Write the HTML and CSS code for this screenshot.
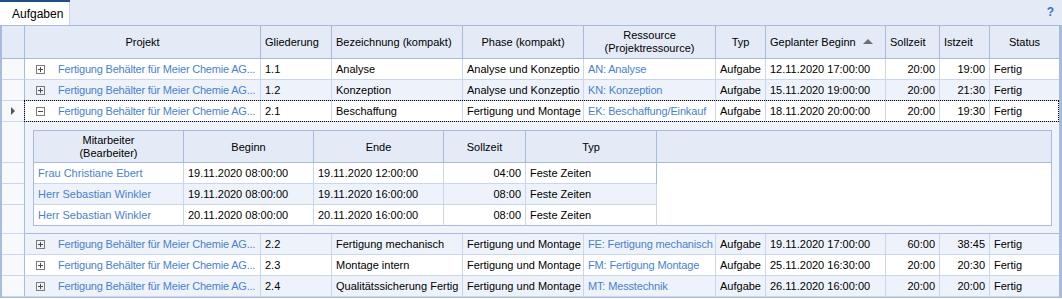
FILE: index.html
```html
<!DOCTYPE html>
<html lang="de">
<head>
    <meta charset="UTF-8">
    <title>Aufgaben</title>
    <link rel="stylesheet" href="styles.css">
</head>
<body>
    <div class="tabbar">
        <div class="tab">Aufgaben</div>
        <span class="help">?</span>
    </div>

    <div class="grid">
        <div class="row head">
            <div class="cell ind"></div>
            <div class="cell center">Projekt</div>
            <div class="cell">Gliederung</div>
            <div class="cell">Bezeichnung (kompakt)</div>
            <div class="cell center">Phase (kompakt)</div>
            <div class="cell center two">Ressource<br>(Projektressource)</div>
            <div class="cell center">Typ</div>
            <div class="cell sort">Geplanter Beginn <span class="arrow"></span></div>
            <div class="cell">Sollzeit</div>
            <div class="cell">Istzeit</div>
            <div class="cell center">Status</div>
        </div>

        <div class="row">
            <div class="cell ind"></div>
            <div class="cell proj"><span class="exp plus"></span><span class="link ell">Fertigung Behälter für Meier Chemie AG...</span></div>
            <div class="cell">1.1</div>
            <div class="cell">Analyse</div>
            <div class="cell">Analyse und Konzeptio</div>
            <div class="cell link res">AN: Analyse</div>
            <div class="cell">Aufgabe</div>
            <div class="cell">12.11.2020 17:00:00</div>
            <div class="cell num">20:00</div>
            <div class="cell num">19:00</div>
            <div class="cell">Fertig</div>
        </div>

        <div class="row alt">
            <div class="cell ind"></div>
            <div class="cell proj"><span class="exp plus"></span><span class="link ell">Fertigung Behälter für Meier Chemie AG...</span></div>
            <div class="cell">1.2</div>
            <div class="cell">Konzeption</div>
            <div class="cell">Analyse und Konzeptio</div>
            <div class="cell link res">KN: Konzeption</div>
            <div class="cell">Aufgabe</div>
            <div class="cell">15.11.2020 19:00:00</div>
            <div class="cell num">20:00</div>
            <div class="cell num">21:30</div>
            <div class="cell">Fertig</div>
        </div>

        <div class="row focus">
            <div class="cell ind"><span class="pointer"></span></div>
            <div class="cell proj"><span class="exp"></span><span class="link ell">Fertigung Behälter für Meier Chemie AG...</span></div>
            <div class="cell">2.1</div>
            <div class="cell">Beschaffung</div>
            <div class="cell">Fertigung und Montage</div>
            <div class="cell link res">EK: Beschaffung/Einkauf</div>
            <div class="cell">Aufgabe</div>
            <div class="cell">18.11.2020 20:00:00</div>
            <div class="cell num">20:00</div>
            <div class="cell num">19:30</div>
            <div class="cell">Fertig</div>
        </div>

        <div class="detail-row">
            <div class="cell ind detail-ind"></div>
            <div class="detail">
                <div class="sub">
                    <div class="sh center two">Mitarbeiter<br>(Bearbeiter)</div>
                    <div class="sh center">Beginn</div>
                    <div class="sh center">Ende</div>
                    <div class="sh center">Sollzeit</div>
                    <div class="sh center">Typ</div>
                    <div class="sh"></div>

                    <div class="sc link">Frau Christiane Ebert</div>
                    <div class="sc">19.11.2020 08:00:00</div>
                    <div class="sc">19.11.2020 12:00:00</div>
                    <div class="sc num">04:00</div>
                    <div class="sc">Feste Zeiten</div>
                    <div class="sc blank"></div>

                    <div class="sc alt link">Herr Sebastian Winkler</div>
                    <div class="sc alt">19.11.2020 08:00:00</div>
                    <div class="sc alt">19.11.2020 16:00:00</div>
                    <div class="sc alt num">08:00</div>
                    <div class="sc alt">Feste Zeiten</div>

                    <div class="sc link">Herr Sebastian Winkler</div>
                    <div class="sc">20.11.2020 08:00:00</div>
                    <div class="sc">20.11.2020 16:00:00</div>
                    <div class="sc num">08:00</div>
                    <div class="sc">Feste Zeiten</div>
                </div>
            </div>
        </div>

        <div class="row alt">
            <div class="cell ind"></div>
            <div class="cell proj"><span class="exp plus"></span><span class="link ell">Fertigung Behälter für Meier Chemie AG...</span></div>
            <div class="cell">2.2</div>
            <div class="cell">Fertigung mechanisch</div>
            <div class="cell">Fertigung und Montage</div>
            <div class="cell link res">FE: Fertigung mechanisch</div>
            <div class="cell">Aufgabe</div>
            <div class="cell">19.11.2020 17:00:00</div>
            <div class="cell num">60:00</div>
            <div class="cell num">38:45</div>
            <div class="cell">Fertig</div>
        </div>

        <div class="row">
            <div class="cell ind"></div>
            <div class="cell proj"><span class="exp plus"></span><span class="link ell">Fertigung Behälter für Meier Chemie AG...</span></div>
            <div class="cell">2.3</div>
            <div class="cell">Montage intern</div>
            <div class="cell">Fertigung und Montage</div>
            <div class="cell link res">FM: Fertigung Montage</div>
            <div class="cell">Aufgabe</div>
            <div class="cell">25.11.2020 16:30:00</div>
            <div class="cell num">20:00</div>
            <div class="cell num">20:30</div>
            <div class="cell">Fertig</div>
        </div>

        <div class="row alt">
            <div class="cell ind"></div>
            <div class="cell proj"><span class="exp plus"></span><span class="link ell">Fertigung Behälter für Meier Chemie AG...</span></div>
            <div class="cell">2.4</div>
            <div class="cell">Qualitätssicherung Fertig</div>
            <div class="cell">Fertigung und Montage</div>
            <div class="cell link res">MT: Messtechnik</div>
            <div class="cell">Aufgabe</div>
            <div class="cell">26.11.2020 16:00:00</div>
            <div class="cell num">20:00</div>
            <div class="cell num">20:00</div>
            <div class="cell">Fertig</div>
        </div>
    </div>
</body>
</html>
```

FILE: styles.css
```css
body {
    margin: 0;
    font-family: 'Liberation Sans', Arial, sans-serif;
    font-size: 11px;
    color: #000;
    background-color: #fff;
}
.tabbar {
    height: 25px;
    background-color: #e4eaf6;
    display: flex;
    align-items: flex-end;
    justify-content: space-between;
}
.tab {
    width: 70px;
    height: 23px;
    box-sizing: border-box;
    background-color: #fff;
    border-right: 1px solid #c8d5ea;
    box-shadow: 0 -2px 0 #1f4f86;
    padding: 5px 0 0 12px;
    font-size: 12px;
}
.help {
    align-self: flex-start;
    margin: 5px 8px 0 0;
    color: #3a70c2;
    font-weight: bold;
    font-size: 12px;
}
.grid {
    border-top: 1px solid #a7bbdc;
    border-left: 2px solid #a7bbdc;
    border-right: 3px solid #a7bbdc;
    border-bottom: 1px solid #a7bbdc;
}
.row,
.detail-row {
    display: grid;
    grid-template-columns: 23px 236px 71px 131px 121px 132px 50px 120px 54px 50px 69px;
    height: 21px;
    position: relative;
}
.detail-row {
    grid-template-columns: 23px 1034px;
    height: auto;
}
.cell {
    box-sizing: border-box;
    border-right: 1px solid #c9d6ec;
    border-bottom: 1px solid #c9d6ec;
    padding: 0 4px;
    display: flex;
    align-items: center;
    white-space: nowrap;
    overflow: hidden;
}
.cell:last-child {
    border-right: none;
}
.row.alt .cell {
    background-color: #eef3fb;
}
.cell.ind,
.row.alt .cell.ind {
    background-color: #f7f9fd;
    border-right-color: #a7bbdc;
}
.detail-ind {
    background-image: linear-gradient(#c9d6ec, #c9d6ec), linear-gradient(#c9d6ec, #c9d6ec), linear-gradient(#c9d6ec, #c9d6ec);
    background-size: 100% 1px;
    background-repeat: no-repeat;
    background-position: 0 40px, 0 61px, 0 82px;
}
.row.head {
    height: 33px;
}
.row.head .cell {
    background-color: #e4eaf6;
    border-right-color: #a7bbdc;
    border-bottom-color: #a7bbdc;
}
.center {
    justify-content: center;
    text-align: center;
}
.num {
    justify-content: flex-end;
}
.link {
    color: #4a7fcf;
}
.res {
    letter-spacing: -0.15px;
}
.two {
    line-height: 13px;
}
.sort .arrow {
    width: 0;
    height: 0;
    border-left: 5px solid transparent;
    border-right: 5px solid transparent;
    border-bottom: 5px solid #6f6f6f;
    margin-left: 7px;
    margin-top: -2px;
}
.proj {
    padding-left: 11px;
}
.ell {
    min-width: 0;
    overflow: hidden;
    white-space: nowrap;
    letter-spacing: -0.2px;
}
.exp {
    flex: none;
    width: 9px;
    height: 9px;
    box-sizing: border-box;
    border: 1px solid #7b7b7b;
    margin-right: 13px;
    position: relative;
}
.exp::before {
    content: '';
    position: absolute;
    left: 1px;
    top: 3px;
    width: 5px;
    height: 1px;
    background-color: #4a4a4a;
}
.exp.plus::after {
    content: '';
    position: absolute;
    left: 3px;
    top: 1px;
    width: 1px;
    height: 5px;
    background-color: #4a4a4a;
}
.pointer {
    width: 0;
    height: 0;
    border-top: 4px solid transparent;
    border-bottom: 4px solid transparent;
    border-left: 4px solid #555;
    margin-left: 5px;
}
.row.focus::after {
    content: '';
    position: absolute;
    left: 22px;
    right: 0;
    top: -1px;
    bottom: 0;
    border: 1px dotted #000;
    pointer-events: none;
}
.detail {
    background-color: #eff3fb;
    border-bottom: 1px solid #a7bbdc;
    padding: 8px 7px 7px 8px;
}
.sub {
    display: grid;
    grid-template-columns: 150px 130px 130px 82px 131px 395px;
    grid-template-rows: 32px 21px 21px 21px;
    border-top: 1px solid #a7bbdc;
    border-left: 1px solid #a7bbdc;
}
.sh,
.sc {
    box-sizing: border-box;
    border-right: 1px solid #a7bbdc;
    border-bottom: 1px solid #c9d6ec;
    padding: 0 4px;
    display: flex;
    align-items: center;
    white-space: nowrap;
    overflow: hidden;
    background-color: #fff;
}
.sh {
    background-color: #e4eaf6;
    border-bottom-color: #a7bbdc;
    border-right-color: #a7bbdc;
}
.sc {
    border-right-color: #c9d6ec;
}
.sc.alt {
    background-color: #eef3fb;
}
.sc.blank {
    grid-column: 6;
    grid-row: 2 / span 3;
    border-right-color: #a7bbdc;
    border-left: 1px solid #a7bbdc;
    margin-left: -1px;
}
.sub .sc:nth-last-child(-n+5) {
    border-bottom-color: #a7bbdc;
}
.sub .sc.blank {
    border-bottom-color: #a7bbdc;
}
```
